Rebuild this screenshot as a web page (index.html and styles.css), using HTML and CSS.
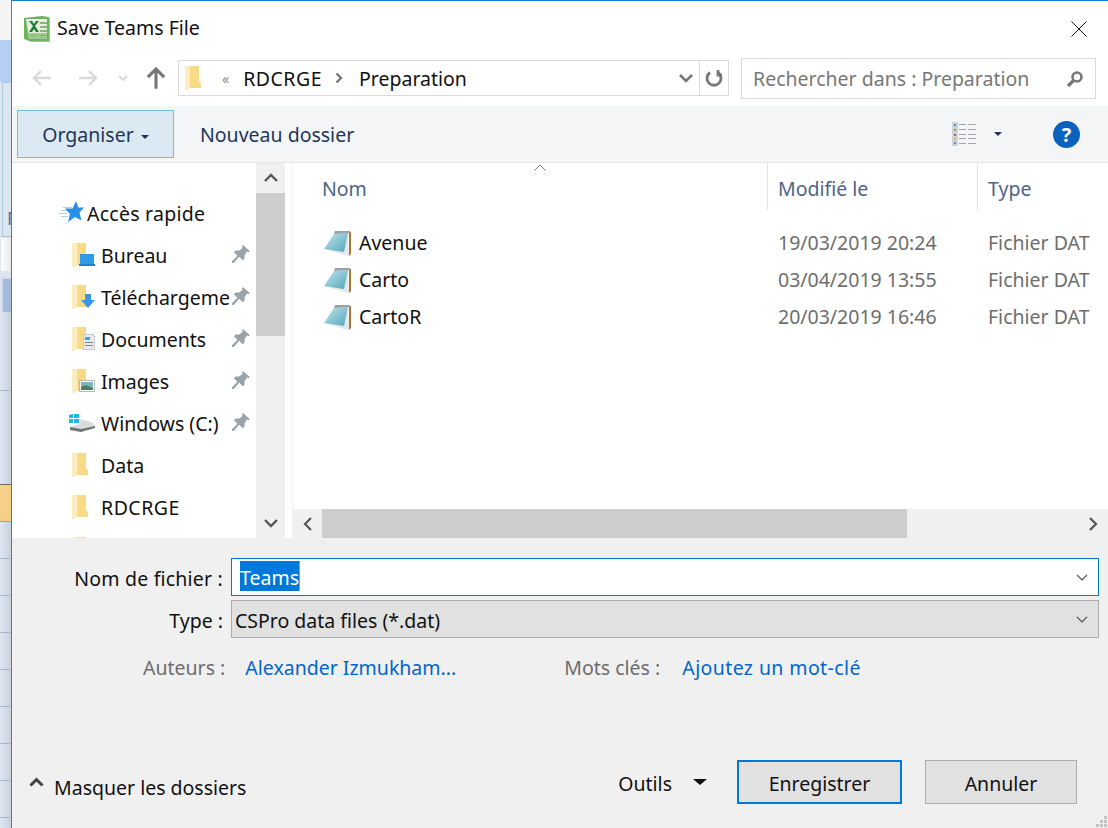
FILE: index.html

```html
<!DOCTYPE html>
<html>
<head>
<meta name="viewport" content="width=device-width, initial-scale=1">
<title>Save Teams File</title>
<link rel="stylesheet" href="styles.css">
</head>
<body>

<svg class="defs" width="0" height="0">
  <defs>
    <linearGradient id="noteblue" x1="0" y1="0" x2="1" y2="1">
      <stop offset="0" stop-color="#c4e6ec"/>
      <stop offset="1" stop-color="#4fa6bb"/>
    </linearGradient>
  </defs>
  <symbol id="folder" viewBox="0 0 16 24">
    <path d="M0 0h14v15l2 2v5H4l-2 2-2-1z" fill="#f9db87"/>
    <path d="M0 0h5v21l-3 3-2-1z" fill="#fcecc0"/>
  </symbol>
  <symbol id="pin" viewBox="0 0 20 20">
    <path d="M12 0l8 7-2 1-1-1-3 4v4l-2 2-4-4-6 7H0v-2l6-6-4-4 2-2h4l4-3-1-1z" fill="#99a3aa"/>
  </symbol>
  <symbol id="note" viewBox="0 0 27 26">
    <path d="M25 2h2v22l-2 2z" fill="#a9762f"/>
    <path d="M24 3l1 23-5-1-20-6z" fill="#e4e8e8"/>
    <path d="M10 4l14-1-4 19L0 19z" fill="url(#noteblue)"/>
    <path d="M11 1h15v2l-16 1z" fill="#97a3a6"/>
  </symbol>
</svg>

<div class="page">
  <div class="behind">
    <div class="app-top"></div>
    <div class="app-ribbon"></div>
    <div class="app-panel"><span>F</span></div>
    <div class="app-white"></div>
    <div class="app-tab"></div>
    <div class="app-cell one"></div>
    <div class="app-cell two"></div>
    <div class="app-cell orange"></div>
    <div class="app-cell"></div>
    <div class="app-cell"></div>
    <div class="app-cell"></div>
    <div class="app-cell"></div>
    <div class="app-cell"></div>
    <div class="app-cell"></div>
    <div class="app-cell"></div>
    <div class="app-cell"></div>
  </div>

  <div class="dialog">
    <div class="titlebar">
      <svg class="xl-icon" width="28" height="28" viewBox="0 0 28 28">
        <path d="M1 3l18-2 7 1v24H6L1 24z" fill="#6fb15c"/>
        <path d="M3 4h21v20H6z" fill="#e6efe0"/>
        <path d="M5 18h19v6H6z" fill="#9dc88e"/>
        <path d="M17 7h7v2h-7zM17 11h7v2h-7zM17 15h7v2h-7zM8 20h6v1H8zM17 20h7v1h-7z" fill="#86b776"/>
        <path d="M6 6h3l2 3 2-3h3l-4 5 4 6h-3l-2-3-2 3H6l4-6z" fill="#1f7a35"/>
        <path d="M26 3h1v24H7v-1h19z" fill="#b7bdb4"/>
      </svg>
      <span class="title">Save Teams File</span>
      <svg class="close" width="16" height="16" viewBox="0 0 16 16">
        <path d="M.5.5l15 15M15.500.5l-15 15" stroke="#111" stroke-width="1" fill="none"/>
      </svg>
    </div>

    <div class="navbar">
      <svg class="nav-arrow first" width="20" height="16" viewBox="0 0 20 16"><path d="M9 1L2 8l7 7M2 8h17" stroke="#dadada" stroke-width="2.400" fill="none"/></svg>
      <svg class="nav-arrow" width="20" height="16" viewBox="0 0 20 16"><path d="M11 1l7 7-7 7M18 8H1" stroke="#dadada" stroke-width="2.400" fill="none"/></svg>
      <svg class="nav-down" width="10" height="6" viewBox="0 0 10 6"><path d="M1 1l4 4 4-4" stroke="#d6d6d6" stroke-width="1.800" fill="none"/></svg>
      <svg class="nav-up" width="18" height="22" viewBox="0 0 20 24"><path d="M10 24V3M1 11l9-9 9 9" stroke="#777" stroke-width="3.400" fill="none"/></svg>
      <div class="address">
        <svg class="addr-folder" width="16" height="24"><use href="#folder"/></svg>
        <span class="crumb-more">«</span>
        <span class="crumb caps">RDCRGE</span>
        <svg class="crumb-sep" width="8" height="12" viewBox="0 0 8 12"><path d="M1.500 1.500L6 6l-4.500 4.500" stroke="#777" stroke-width="2.400" fill="none"/></svg>
        <span class="crumb">Preparation</span>
        <svg class="addr-down" width="14" height="9" viewBox="0 0 14 9"><path d="M1 1l6 6 6-6" stroke="#777" stroke-width="2.600" fill="none"/></svg>
        <div class="addr-refresh">
          <svg width="18" height="18" viewBox="0 0 18 18"><path d="M5 3.500a7 7 0 1 0 8 0M13 1v5h4" stroke="#777" stroke-width="2.800" fill="none"/></svg>
        </div>
      </div>
      <div class="search">
        <span>Rechercher dans : Preparation</span>
        <svg width="18" height="18" viewBox="0 0 18 18"><circle cx="11" cy="7" r="4.500" stroke="#777" stroke-width="2.600" fill="none"/><path d="M7.500 10.500L2 16" stroke="#777" stroke-width="3.200"/></svg>
      </div>
    </div>

    <div class="toolbar">
      <button class="organize">Organiser<i class="caret"></i></button>
      <span class="new-folder">Nouveau dossier</span>
      <svg class="views" width="26" height="24" viewBox="0 0 26 24">
        <path d="M0 0h6v24H0z" fill="#cfd2d6"/>
        <path d="M2 2h2v2H2z" fill="#4d94d6"/><path d="M2 7h2v2H2z" fill="#8fae5c"/><path d="M2 12h2v2H2z" fill="#d9503f"/><path d="M2 16h2v2H2z" fill="#d6c05c"/><path d="M2 20h2v2H2z" fill="#4d94d6"/>
        <path d="M7 2h7v1H7zM16 2h8v1h-8zM7 7h7v1H7zM16 7h8v1h-8zM7 12h7v1H7zM16 12h8v1h-8zM7 16h7v1H7zM16 16h8v1h-8zM7 21h7v1H7zM16 21h8v1h-8z" fill="#a2a5a9"/>
      </svg>
      <i class="caret views-caret"></i>
      <span class="help">?</span>
    </div>

    <div class="main">
      <div class="tree">
        <div class="tree-row top">
          <svg class="star" width="26" height="22" viewBox="0 0 26 22">
            <path d="M5 6h9v1H5zM3 9h8v1H3zM1 12h8v1H1zM3 15h7v1H3z" fill="#a9d2f5"/>
            <path d="M18 0l2.500 6.500H26l-4.500 5 2 8L17 16l-7 5 2-8-5-5.500h7.500z" fill="#2b8fe8"/>
          </svg>
          <span class="quick">Accès rapide</span>
        </div>
        <div class="tree-row">
          <span class="tree-icon">
            <svg width="16" height="24"><use href="#folder"/></svg>
            <svg class="badge" width="16" height="12" viewBox="0 0 16 12"><path d="M1 0h14v10H1z" fill="#2f9ae8"/><path d="M0 10h16v2H0z" fill="#1d7fd0"/></svg>
          </span>
          <span class="tree-name">Bureau</span>
          <svg class="pin" width="18" height="18"><use href="#pin"/></svg>
        </div>
        <div class="tree-row">
          <span class="tree-icon">
            <svg width="16" height="24"><use href="#folder"/></svg>
            <svg class="badge" width="14" height="14" viewBox="0 0 14 14"><path d="M4 0h6v6h4l-7 8-7-8h4z" fill="#3d94e0"/></svg>
          </span>
          <span class="tree-name">Téléchargeme</span>
          <svg class="pin" width="18" height="18"><use href="#pin"/></svg>
        </div>
        <div class="tree-row">
          <span class="tree-icon">
            <svg width="16" height="24"><use href="#folder"/></svg>
            <svg class="badge" width="12" height="16" viewBox="0 0 12 16"><path d="M0 0h9l3 3v13H0z" fill="#e8ecef" stroke="#9aa0a5" stroke-width=".8"/><path d="M2 3h5v3H2z" fill="#4d9ad8"/><path d="M2 8h8v1H2zM2 11h8v1H2z" fill="#7d8388"/></svg>
          </span>
          <span class="tree-name">Documents</span>
          <svg class="pin" width="18" height="18"><use href="#pin"/></svg>
        </div>
        <div class="tree-row">
          <span class="tree-icon">
            <svg width="16" height="24"><use href="#folder"/></svg>
            <svg class="badge" width="16" height="12" viewBox="0 0 16 12"><path d="M0 0h16v12H0z" fill="#b4b8bb"/><path d="M1 1h14v10H1z" fill="#fff"/><path d="M2 2h12v8H2z" fill="#7fb5bd"/><path d="M2 7l5-2 7 3v2H2z" fill="#4f7f5f"/></svg>
          </span>
          <span class="tree-name">Images</span>
          <svg class="pin" width="18" height="18"><use href="#pin"/></svg>
        </div>
        <div class="tree-row">
          <svg class="drive" width="26" height="18" viewBox="0 0 26 18">
            <path d="M0 1l4-1v4H0zM5 0l5-1v5H5zM0 5h4v4H0zM5 5h5v4H5z" fill="#1fb5ef"/>
            <path d="M11 5l12 3 3 4v1L12 16 1 14v-1l9-3z" fill="#d9dcdd"/>
            <path d="M1 13l11 2 14-3v2l-14 4-11-2z" fill="#6f7678"/>
          </svg>
          <span class="tree-name">Windows (C:)</span>
          <svg class="pin" width="18" height="18"><use href="#pin"/></svg>
        </div>
        <div class="tree-row">
          <span class="tree-icon"><svg width="16" height="24"><use href="#folder"/></svg></span>
          <span class="tree-name">Data</span>
        </div>
        <div class="tree-row">
          <span class="tree-icon"><svg width="16" height="24"><use href="#folder"/></svg></span>
          <span class="tree-name caps">RDCRGE</span>
        </div>
        <div class="tree-row">
          <span class="tree-icon"><svg width="16" height="24"><use href="#folder"/></svg></span>
        </div>
      </div>

      <div class="vscroll">
        <svg class="sb-btn" width="14" height="9" viewBox="0 0 14 9"><path d="M1 8l6-6 6 6" stroke="#555" stroke-width="2.400" fill="none"/></svg>
        <div class="vthumb"></div>
        <svg class="sb-btn bottom" width="14" height="9" viewBox="0 0 14 9"><path d="M1 1l6 6 6-6" stroke="#555" stroke-width="2.400" fill="none"/></svg>
      </div>

      <div class="files">
        <div class="file-area">
          <div class="cols">
            <div class="col name">Nom
              <svg class="sort" width="12" height="7" viewBox="0 0 12 7"><path d="M.5 6.500L6 1l5.500 5.500" stroke="#777" fill="none"/></svg>
            </div>
            <div class="col date">Modifié le</div>
            <div class="col type">Type</div>
          </div>
          <div class="file">
            <div class="cell name"><svg width="27" height="26"><use href="#note"/></svg>Avenue</div>
            <div class="cell date">19/03/2019 20:24</div>
            <div class="cell type">Fichier DAT</div>
          </div>
          <div class="file">
            <div class="cell name"><svg width="27" height="26"><use href="#note"/></svg>Carto</div>
            <div class="cell date">03/04/2019 13:55</div>
            <div class="cell type">Fichier DAT</div>
          </div>
          <div class="file">
            <div class="cell name"><svg width="27" height="26"><use href="#note"/></svg>CartoR</div>
            <div class="cell date">20/03/2019 16:46</div>
            <div class="cell type">Fichier DAT</div>
          </div>
        </div>
        <div class="hscroll">
          <svg class="hs-btn" width="9" height="14" viewBox="0 0 9 14"><path d="M8 1L2 7l6 6" stroke="#555" stroke-width="2.200" fill="none"/></svg>
          <div class="hthumb"></div>
          <svg class="hs-btn" width="9" height="14" viewBox="0 0 9 14"><path d="M1 1l6 6-6 6" stroke="#555" stroke-width="2.200" fill="none"/></svg>
        </div>
      </div>
    </div>

    <div class="footer">
      <div class="form">
        <label class="wide">Nom de fichier :</label>
        <div class="field active"><span class="selected">Teams</span>
          <svg width="12" height="7" viewBox="0 0 12 7"><path d="M1 1l5 5 5-5" stroke="#555" stroke-width="1.200" fill="none"/></svg>
        </div>
        <label>Type :</label>
        <div class="field grey"><span class="value">CSPro data files (*.dat)</span>
          <svg width="12" height="7" viewBox="0 0 12 7"><path d="M1 1l5 5 5-5" stroke="#555" stroke-width="1.200" fill="none"/></svg>
        </div>
      </div>

      <div class="meta">
        <span class="meta-label authors">Auteurs :</span>
        <span class="meta-link author">Alexander Izmukham...</span>
        <span class="meta-label keywords">Mots clés :</span>
        <span class="meta-link add">Ajoutez un mot-clé</span>
      </div>

      <div class="actions">
        <svg class="hide-chevron" width="15" height="10" viewBox="0 0 15 10"><path d="M1.500 8.500l6-6 6 6" stroke="#444" stroke-width="3" fill="none"/></svg>
        <span class="hide-label">Masquer les dossiers</span>
        <span class="tools">Outils</span>
        <i class="tools-caret"></i>
        <button class="btn primary">Enregistrer</button>
        <button class="btn">Annuler</button>
      </div>
      <svg class="grip" width="12" height="12" viewBox="0 0 12 12"><path d="M8 0h3v3H8zM4 4h3v3H4zM8 4h3v3H8zM0 8h3v3H0zM4 8h3v3H4zM8 8h3v3H8z" fill="#c4c4c4"/></svg>
    </div>
  </div>
</div>

</body>
</html>
```

FILE: styles.css

```css
* {
    box-sizing: border-box;
}

html, body {
    margin: 0;
    height: 100%;
    overflow: hidden;
}

body {
    font-family: "Noto Sans", "Open Sans", sans-serif;
    font-size: 19.5px;
    color: #111;
    background-color: #f0f0f0;
}

.defs {
    position: absolute;
}

svg {
    flex: none;
    display: block;
}

.page {
    display: flex;
    width: 1108px;
    height: 828px;
}

/* the excel window behind the dialog */
.behind {
    width: 11px;
    flex: none;
    overflow: hidden;
    background: linear-gradient(to right, #e0e6f2, #c9d1dd);
}

.app-top {
    height: 40px;
    background-color: #f4f4f4;
}

.app-ribbon {
    height: 42px;
    background-color: #b4cff1;
}

.app-panel {
    height: 155px;
    margin-left: 2px;
    padding-top: 123px;
    border: 1px solid #a9cdd6;
    border-right: none;
    background-color: #dbe5f1;
    color: #5a6f9e;
    font-size: 18px;
    line-height: 24px;
}

.app-panel span {
    margin-left: 4px;
}

.app-white {
    height: 40px;
    margin-left: 1px;
    border-top: 1px solid #e4e4e4;
    border-bottom: 6px solid #dfe4ec;
    background: linear-gradient(to right, #fff, #e8e8e8);
}

.app-tab {
    height: 35px;
    margin-left: 1px;
    background-color: #a5b9dc;
    border-left: 2px solid #d3dcec;
    border-top: 2px solid #d3dcec;
}

.app-cell {
    height: 37px;
    border-bottom: 1px solid #a3b7d3;
}

.app-cell.one {
    height: 79px;
}

.app-cell.two {
    height: 93px;
    border-bottom: none;
}

.app-cell.orange {
    height: 38px;
    background-color: #f6cf88;
    border-top: 1px solid #6d6d6d;
    border-bottom: 1px solid #e2953a;
}

.dialog {
    width: 1097px;
    flex: none;
    display: flex;
    flex-direction: column;
    border-top: 1px solid #0f80d8;
    border-left: 1px solid #2f86cc;
    background-color: #fff;
}

.titlebar {
    height: 55px;
    display: flex;
    align-items: center;
    padding: 0 21px 0 11px;
}

.title {
    margin: 0 0 2px 6px;
    flex: 1;
}

.navbar {
    height: 50px;
    display: flex;
    align-items: center;
    padding-bottom: 6px;
}

.nav-arrow.first {
    margin-left: 20px;
}

.nav-arrow {
    margin-right: 26px;
}

.nav-arrow.first + .nav-arrow {
    margin-right: 20px;
}

.nav-down {
    margin-right: 19px;
}

.nav-up {
    margin-right: 13px;
}

.address {
    width: 551px;
    height: 36px;
    display: flex;
    align-items: center;
    border: 1px solid #d9d9d9;
    margin-right: 12px;
}

.addr-folder {
    margin-left: 6px;
}

.crumb-more {
    color: #888;
    font-size: 14px;
    margin: 0 14px 0 21px;
}

.crumb-sep {
    margin: 0 16px 0 13px;
}

.caps {
    letter-spacing: .5px;
}

.addr-down {
    margin-left: auto;
    margin-right: 6px;
}

.addr-refresh {
    width: 29px;
    height: 100%;
    display: flex;
    align-items: center;
    justify-content: center;
    border-left: 1px solid #d9d9d9;
}

.search {
    width: 355px;
    height: 41px;
    margin-top: 1px;
    display: flex;
    align-items: center;
    justify-content: space-between;
    padding: 0 11px;
    border: 1px solid #d9d9d9;
    color: #777;
}

.toolbar {
    height: 57px;
    display: flex;
    align-items: center;
    padding-left: 5px;
    background-color: #f4f5f7;
    border-bottom: 1px solid #e5e5e5;
    color: #1f3557;
}

.organize {
    width: 157px;
    height: 48px;
    margin-right: 26px;
    padding: 0;
    border: 1px solid #7db9dc;
    background-color: #dbe9f3;
    font: inherit;
    color: #1f3557;
}

.caret {
    display: inline-block;
    margin-left: 7px;
    vertical-align: 3px;
    border-left: 4px solid transparent;
    border-right: 4px solid transparent;
    border-top: 4px solid #1f3557;
}

.views {
    margin-left: auto;
}

.views-caret {
    margin: 0 51px 0 16px;
}

.help {
    width: 27px;
    height: 27px;
    margin-right: 28px;
    border-radius: 50%;
    background-color: #0b62bd;
    color: #fff;
    font-weight: bold;
    font-size: 20px;
    line-height: 27px;
    text-align: center;
}

.main {
    height: 375px;
    display: flex;
}

.tree {
    width: 244px;
    flex: none;
    padding-top: 29px;
    overflow: hidden;
}

.tree-row {
    height: 42px;
    display: flex;
    align-items: center;
    padding-left: 60px;
}

.tree-row.top {
    padding-left: 46px;
}

.quick {
    letter-spacing: .25px;
}

.star {
    margin: 0 3px 2px 0;
}

.tree-icon {
    position: relative;
    width: 29px;
    height: 24px;
    flex: none;
}

.badge {
    position: absolute;
    right: 6px;
    bottom: 1px;
}

.drive {
    margin: 0 6px 0 -3px;
}

.tree-name {
    white-space: nowrap;
}

.pin {
    margin: 0 6px 2px auto;
}

.vscroll {
    width: 29px;
    flex: none;
    display: flex;
    flex-direction: column;
    align-items: center;
    background-color: #f0f0f0;
}

.sb-btn {
    margin: 10px 0 11px;
}

.sb-btn.bottom {
    margin: auto 0 10px;
}

.vthumb {
    width: 100%;
    height: 143px;
    background-color: #cdcdcd;
}

.files {
    flex: 1;
    margin-left: 7px;
    min-width: 0;
    display: flex;
    flex-direction: column;
    border-left: 1px solid #f4f4f4;
}

.file-area {
    flex: 1;
}

.cols {
    height: 47px;
    display: flex;
    margin-bottom: 14px;
    color: #4d6485;
}

.col {
    padding-top: 12px;
    line-height: 27px;
}

.col.name {
    position: relative;
    width: 475px;
    padding-left: 29px;
    border-right: 1px solid #e5e5e5;
}

.sort {
    position: absolute;
    left: 241px;
    top: 1px;
}

.col.date {
    width: 210px;
    padding-left: 10px;
    border-right: 1px solid #e5e5e5;
}

.col.type {
    padding-left: 10px;
}

.file {
    height: 37px;
    display: flex;
    align-items: center;
}

.cell.name {
    width: 475px;
    padding-left: 31px;
    display: flex;
    align-items: center;
    gap: 8px;
    color: #111;
}

.cell.date {
    width: 210px;
    padding-left: 10px;
    color: #6d6d6d;
}

.cell.type {
    padding-left: 10px;
    color: #6d6d6d;
    white-space: nowrap;
}

.hscroll {
    height: 29px;
    display: flex;
    align-items: center;
    background-color: #f0f0f0;
}

.hs-btn {
    margin: 0 10px;
}

.hthumb {
    width: 585px;
    height: 100%;
    margin-right: auto;
    background-color: #cdcdcd;
}

.footer {
    position: relative;
    flex: 1;
    background-color: #f0f0f0;
    padding-top: 20px;
}

.form {
    display: grid;
    grid-template-columns: 211px 868px;
    column-gap: 8px;
    row-gap: 4px;
    align-items: center;
}

.form label {
    text-align: right;
    padding-top: 2px;
}

.form label.wide {
    letter-spacing: .2px;
}

.field {
    height: 38px;
    display: flex;
    align-items: center;
    justify-content: space-between;
    padding-right: 10px;
    border: 1px solid #adadad;
    background-color: #e1e1e1;
}

.field.active {
    padding-left: 8px;
    border-color: #0078d7;
    background-color: #fff;
}

.field.grey {
    padding-left: 3px;
}

.value {
    padding-top: 2px;
}

.selected {
    height: 30px;
    margin-bottom: 2px;
    line-height: 33px;
    background-color: #0078d7;
    color: #fff;
    border-right: 1px solid #f08a24;
}

.meta {
    display: flex;
    margin-top: 16px;
    line-height: 27px;
}

.meta-label {
    color: #6d6d6d;
    margin-right: 20px;
}

.meta-label.authors {
    margin-left: 131px;
}

.meta-label.keywords {
    margin-right: 22px;
}

.meta-link {
    color: #0066cc;
}

.meta-link.author {
    width: 319px;
}

.meta-link.add {
    letter-spacing: .4px;
}

.actions {
    display: flex;
    align-items: center;
    margin-top: 79px;
    height: 44px;
}

.hide-chevron {
    margin-left: 17px;
}

.hide-label {
    margin-left: 10px;
    position: relative;
    top: 5px;
}

.tools {
    margin-left: auto;
    padding-top: 2px;
}

.tools-caret {
    margin: 0 30px 0 21px;
    border-left: 7px solid transparent;
    border-right: 7px solid transparent;
    border-top: 6px solid #111;
}

.btn {
    width: 152px;
    height: 44px;
    margin-right: 31px;
    padding: 2px 0 0;
    border: 1px solid #adadad;
    background-color: #e1e1e1;
    font: inherit;
    color: #111;
}

.btn.primary {
    width: 165px;
    margin-right: 23px;
    border: 2px solid #0078d7;
}

.grip {
    position: absolute;
    right: 0;
    bottom: 0;
}
```
